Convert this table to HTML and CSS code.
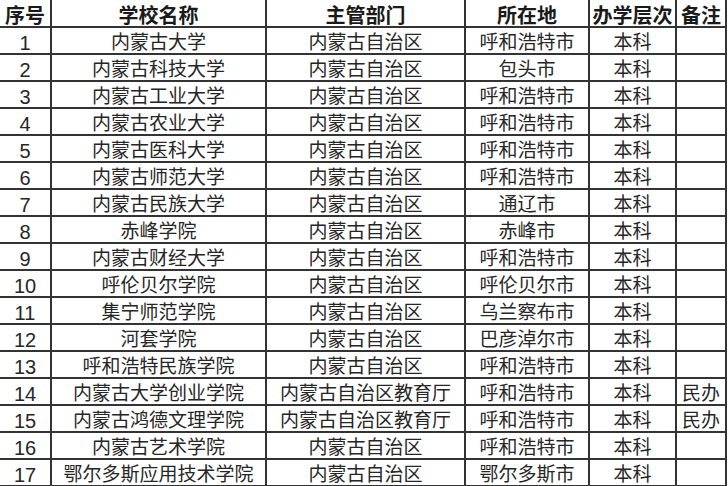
FILE: index.html
```html
<!DOCTYPE html>
<html lang="zh-CN">
<head>
<meta charset="utf-8">
<title>内蒙古高校名单</title>
<link rel="stylesheet" href="styles.css">
</head>
<body>
<table class="list">
<colgroup>
<col class="c-no"><col class="c-name"><col class="c-dept"><col class="c-loc"><col class="c-level"><col class="c-note">
</colgroup>
<thead>
<tr><th>序号</th><th>学校名称</th><th>主管部门</th><th>所在地</th><th>办学层次</th><th>备注</th></tr>
</thead>
<tbody>
<tr><td class="num">1</td><td>内蒙古大学</td><td>内蒙古自治区</td><td>呼和浩特市</td><td>本科</td><td></td></tr>
<tr><td class="num">2</td><td>内蒙古科技大学</td><td>内蒙古自治区</td><td>包头市</td><td>本科</td><td></td></tr>
<tr><td class="num">3</td><td>内蒙古工业大学</td><td>内蒙古自治区</td><td>呼和浩特市</td><td>本科</td><td></td></tr>
<tr><td class="num">4</td><td>内蒙古农业大学</td><td>内蒙古自治区</td><td>呼和浩特市</td><td>本科</td><td></td></tr>
<tr><td class="num">5</td><td>内蒙古医科大学</td><td>内蒙古自治区</td><td>呼和浩特市</td><td>本科</td><td></td></tr>
<tr><td class="num">6</td><td>内蒙古师范大学</td><td>内蒙古自治区</td><td>呼和浩特市</td><td>本科</td><td></td></tr>
<tr><td class="num">7</td><td>内蒙古民族大学</td><td>内蒙古自治区</td><td>通辽市</td><td>本科</td><td></td></tr>
<tr><td class="num">8</td><td>赤峰学院</td><td>内蒙古自治区</td><td>赤峰市</td><td>本科</td><td></td></tr>
<tr><td class="num">9</td><td>内蒙古财经大学</td><td>内蒙古自治区</td><td>呼和浩特市</td><td>本科</td><td></td></tr>
<tr><td class="num">10</td><td>呼伦贝尔学院</td><td>内蒙古自治区</td><td>呼伦贝尔市</td><td>本科</td><td></td></tr>
<tr><td class="num">11</td><td>集宁师范学院</td><td>内蒙古自治区</td><td>乌兰察布市</td><td>本科</td><td></td></tr>
<tr><td class="num">12</td><td>河套学院</td><td>内蒙古自治区</td><td>巴彦淖尔市</td><td>本科</td><td></td></tr>
<tr><td class="num">13</td><td>呼和浩特民族学院</td><td>内蒙古自治区</td><td>呼和浩特市</td><td>本科</td><td></td></tr>
<tr><td class="num">14</td><td>内蒙古大学创业学院</td><td>内蒙古自治区教育厅</td><td>呼和浩特市</td><td>本科</td><td>民办</td></tr>
<tr><td class="num">15</td><td>内蒙古鸿德文理学院</td><td>内蒙古自治区教育厅</td><td>呼和浩特市</td><td>本科</td><td>民办</td></tr>
<tr><td class="num">16</td><td>内蒙古艺术学院</td><td>内蒙古自治区</td><td>呼和浩特市</td><td>本科</td><td></td></tr>
<tr><td class="num">17</td><td>鄂尔多斯应用技术学院</td><td>内蒙古自治区</td><td>鄂尔多斯市</td><td>本科</td><td></td></tr>
</tbody>
</table>
</body>
</html>
```
FILE: styles.css
```css
html, body {
  margin: 0;
  padding: 0;
  background: #ffffff;
}

.list {
  border-collapse: separate;
  border-spacing: 0;
  table-layout: fixed;
  width: 727px;
  font-family: "Liberation Sans", "Noto Sans CJK SC", sans-serif;
  font-size: 19px;
  color: #262626;
}

.c-no { width: 52px; }
.c-name { width: 215px; }
.c-dept { width: 199px; }
.c-loc { width: 124px; }
.c-level { width: 87px; }
.c-note { width: 50px; }

.list th,
.list td {
  padding: 5px 0 0 0;
  text-align: center;
  vertical-align: top;
  white-space: nowrap;
  overflow: hidden;
  border-right: 2px solid #333333;
  border-bottom: 2px solid #333333;
  line-height: 20px;
  height: 20px;
}

.list th {
  padding-top: 6px;
  height: 20px;
  line-height: 20px;
  font-size: 20px;
  font-weight: bold;
  color: #1a1a1a;
}

.list .num {
  font-family: "Liberation Sans", sans-serif;
  font-size: 20px;
}
```
